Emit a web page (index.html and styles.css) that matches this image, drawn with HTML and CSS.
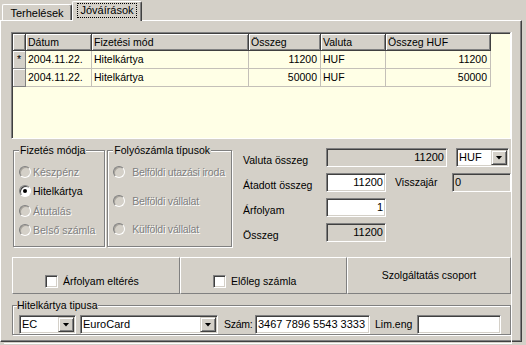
FILE: index.html
```html
<!DOCTYPE html>
<html>
<head>
<meta charset="utf-8">
<link rel="stylesheet" href="styles.css">
</head>
<body>
<div class="tabs">
  <div class="tab">Terhelések</div>
  <div class="tab active"><span class="focus">Jóváírások</span></div>
</div>
<div class="panel">
  <div class="inner">
    <div class="grid">
      <div class="table">
        <div class="hd"></div><div class="hd">Dátum</div><div class="hd">Fizetési mód</div><div class="hd">Összeg</div><div class="hd">Valuta</div><div class="hd">Összeg HUF</div>
        <div class="ind">*</div><div class="c">2004.11.22.</div><div class="c">Hitelkártya</div><div class="c r">11200</div><div class="c">HUF</div><div class="c r">11200</div>
        <div class="ind"></div><div class="c">2004.11.22.</div><div class="c">Hitelkártya</div><div class="c r">50000</div><div class="c">HUF</div><div class="c r">50000</div>
      </div>
    </div>
    <div class="lower">
      <div class="group g1">
        <div class="gtitle">Fizetés módja</div>
        <div class="radios">
          <div class="opt dis"><span class="radio"></span><span class="t">Készpénz</span></div>
          <div class="opt"><span class="radio on"></span><span class="t">Hitelkártya</span></div>
          <div class="opt dis"><span class="radio"></span><span class="t">Átutalás</span></div>
          <div class="opt dis"><span class="radio"></span><span class="t">Belső számla</span></div>
        </div>
      </div>
      <div class="group g2">
        <div class="gtitle">Folyószámla típusok</div>
        <div class="radios">
          <div class="opt dis"><span class="radio"></span><span class="t">Belföldi utazási iroda</span></div>
          <div class="opt dis"><span class="radio"></span><span class="t">Belföldi vállalat</span></div>
          <div class="opt dis"><span class="radio"></span><span class="t">Külföldi vállalat</span></div>
        </div>
      </div>
      <div class="right">
        <div class="frow">
          <div class="lbl">Valuta összeg</div>
          <div class="field ro w121">11200</div>
          <div class="combo huf"><span class="ctext">HUF</span><span class="dbtn"><span class="arrow"></span></span></div>
        </div>
        <div class="frow">
          <div class="lbl">Átadott összeg</div>
          <div class="field w60">11200</div>
          <div class="lbl2">Visszajár</div>
          <div class="field ro w59 left">0</div>
        </div>
        <div class="frow">
          <div class="lbl">Árfolyam</div>
          <div class="field w60">1</div>
        </div>
        <div class="frow">
          <div class="lbl">Összeg</div>
          <div class="field ro w60">11200</div>
        </div>
      </div>
    </div>
    <div class="btnrow">
      <div class="pbtn b1"><span class="chk"></span><span class="t">Árfolyam eltérés</span></div>
      <div class="pbtn b2"><span class="chk"></span><span class="t">Előleg számla</span></div>
      <div class="pbtn b3 center">Szolgáltatás csoport</div>
    </div>
    <div class="group g3">
      <div class="gtitle">Hitelkártya tipusa</div>
      <div class="crow">
        <div class="combo ec"><span class="ctext">EC</span><span class="dbtn"><span class="arrow"></span></span></div>
        <div class="combo euro"><span class="ctext">EuroCard</span><span class="dbtn"><span class="arrow"></span></span></div>
        <div class="lbl3 szam">Szám:</div>
        <div class="field w115 left">3467 7896 5543 3333</div>
        <div class="lbl3 lim">Lim.eng</div>
        <div class="field w84 left"></div>
      </div>
    </div>
  </div>
</div>
</body>
</html>
```

FILE: styles.css
```css
* { box-sizing: border-box; }

body {
  margin: 0;
  background: #d4d0c8;
  font-family: "Liberation Sans", Arial, sans-serif;
  font-size: 10.5px;
  color: #000;
  width: 526px;
  height: 345px;
  overflow: hidden;
}

/* tabs */
.tabs {
  display: flex;
  align-items: flex-end;
  height: 21px;
  padding-left: 2px;
}
.tab {
  width: 70px;
  height: 17px;
  border-top: 1px solid #fff;
  border-left: 1px solid #fff;
  border-right: 1px solid #404040;
  box-shadow: inset -1px 0 #808080;
  border-radius: 2px 2px 0 0;
  display: flex;
  align-items: center;
  justify-content: center;
  padding-bottom: 1px;
  background: #d4d0c8;
  font-size: 11px;
}
.tab.active {
  height: 20px;
  position: relative;
  z-index: 1;
  padding-bottom: 2px;
}
.focus {
  border: 1px dotted #000;
  padding: 0 2px;
  line-height: 13px;
}

/* panel */
.panel {
  position: relative;
  z-index: 0;
  margin-top: -1px;
  width: 522px;
  height: 322px;
  border: 1px solid;
  border-color: #fff #404040 #404040 #fff;
  box-shadow: inset -1px -1px #808080;
  padding: 3px 0 0 3px;
}
.inner {
  width: 508px;
  height: 312px;
  border-right: 1px solid #fff;
  border-bottom: 1px solid #fff;
}

/* grid */
.grid {
  margin: 8px 0 0 7px;
  width: 500px;
  height: 107px;
  background: #ffffe6;
  border: 1px solid;
  border-color: #808080 #fff #fff #808080;
  box-shadow: inset 1px 1px #404040;
  padding: 1px 0 0 1px;
}
.table {
  display: grid;
  grid-template-columns: 13px 66px 157px 72px 65px 105px;
  grid-template-rows: 17px 18px 18px;
}
.hd {
  background: #d4d0c8;
  border-right: 1px solid #404040;
  border-bottom: 1px solid #404040;
  box-shadow: inset 1px 1px #fff, inset -1px -1px #808080;
  padding-left: 2px;
  line-height: 16px;
  white-space: nowrap;
  overflow: hidden;
}
.ind {
  background: #d4d0c8;
  border-right: 1px solid #808080;
  border-bottom: 1px solid #808080;
  box-shadow: inset 1px 1px #fff;
  text-align: center;
  line-height: 17px;
}
.c {
  border-right: 1px solid #c4c0b8;
  border-bottom: 1px solid #c4c0b8;
  padding: 0 3px 0 2px;
  line-height: 17px;
  white-space: nowrap;
}
.c.r { text-align: right; }

/* lower area */
.lower {
  display: flex;
  margin-top: 9px;
  height: 99px;
}
.group {
  border: 1px solid #808080;
  box-shadow: inset 1px 1px #fff, 1px 1px #fff;
}
.g1 { margin: 2px 0 0 9px; width: 94px; height: 97px; }
.g2 { margin: 2px 0 0 2px; width: 127px; height: 97px; }
.gtitle {
  display: table;
  margin: -7px 0 0 5px;
  padding: 0 1px;
  background: #d4d0c8;
  line-height: 13px;
  white-space: nowrap;
}
.g1 .radios { padding-top: 5px; }
.g2 .radios { padding-top: 1px; }
.opt {
  display: flex;
  align-items: center;
  padding-left: 5px;
  height: 19.5px;
  white-space: nowrap;
}
.g2 .opt { height: 28.5px; }
.radio {
  flex: none;
  width: 12px;
  height: 12px;
  border-radius: 50%;
  border: 1px solid;
  border-color: #808080 #fff #fff #808080;
  box-shadow: inset 1px 1px #404040;
  background: #fff;
  margin-right: 2px;
  display: flex;
  align-items: center;
  justify-content: center;
}
.g2 .radio { margin-right: 7px; }
.g2 .t { letter-spacing: -0.2px; }
.dis .radio {
  background: #d4d0c8;
  box-shadow: inset 1px 1px #a8a49c;
}
.dis .t {
  color: #808080;
  text-shadow: 1px 1px 0 #fff;
}
.radio.on::after {
  content: "";
  width: 4px;
  height: 4px;
  border-radius: 50%;
  background: #000;
}

/* right fields */
.right { margin-left: 11px; }
.frow {
  display: flex;
  height: 19px;
  margin-bottom: 6px;
}
.lbl {
  width: 83px;
  padding-top: 6px;
  line-height: 13px;
  white-space: nowrap;
}
.lbl2 {
  width: 57px;
  margin-left: 9px;
  line-height: 19px;
}
.field {
  height: 19px;
  border: 1px solid;
  border-color: #808080 #fff #fff #808080;
  box-shadow: inset 1px 1px #404040, inset -1px -1px #d4d0c8;
  background: #fff;
  padding: 0 2px;
  line-height: 17px;
  text-align: right;
  white-space: nowrap;
  overflow: hidden;
  font-size: 11px;
}
.field.ro { background: #d4d0c8; }
.field.left { text-align: left; }
.w121 { width: 121px; }
.w60 { width: 60px; }
.w59 { width: 59px; }
.w115 { width: 115px; }
.w84 { width: 84px; }

.combo {
  display: flex;
  height: 19px;
  border: 1px solid;
  border-color: #808080 #fff #fff #808080;
  box-shadow: inset 1px 1px #404040, inset -1px -1px #d4d0c8;
  background: #fff;
  padding: 1px;
  font-size: 11px;
}
.ctext {
  flex: 1;
  padding-left: 1px;
  line-height: 15px;
  white-space: nowrap;
}
.dbtn {
  flex: none;
  width: 16px;
  height: 15px;
  background: #d4d0c8;
  border: 1px solid;
  border-color: #d4d0c8 #404040 #404040 #d4d0c8;
  box-shadow: inset 1px 1px #fff, inset -1px -1px #808080;
  display: flex;
  align-items: center;
  justify-content: center;
}
.arrow {
  width: 7px;
  height: 4px;
  background: #000;
  clip-path: polygon(0 0, 100% 0, 50% 100%);
}
.huf { margin-left: 9px; width: 53px; }

/* button row */
.btnrow {
  display: flex;
  margin: 10px 0 0 8px;
}
.pbtn {
  height: 37px;
  border: 1px solid;
  border-color: #fff #808080 #808080 #fff;
  display: flex;
  align-items: flex-start;
  padding: 17px 0 0 32px;
  white-space: nowrap;
}
.pbtn .t { line-height: 13px; }
.b1 { width: 168px; }
.b2 { width: 167px; }
.b3 { width: 164px; }
.pbtn.center {
  padding: 0 0 1px 0;
  align-items: center;
  justify-content: center;
}
.chk {
  flex: none;
  width: 13px;
  height: 13px;
  border: 1px solid;
  border-color: #808080 #fff #fff #808080;
  box-shadow: inset 1px 1px #404040, inset -1px -1px #d4d0c8;
  background: #fff;
  margin-right: 5px;
}

/* card group */
.g3 {
  margin: 11px 0 0 8px;
  width: 499px;
  height: 30px;
}
.g3 .gtitle { margin-left: 4px; padding: 0; }
.crow {
  display: flex;
  align-items: center;
  margin-top: 3px;
  padding-left: 6px;
}
.ec { width: 57px; }
.euro { width: 138px; margin-left: 4px; }
.lbl3 { white-space: nowrap; line-height: 19px; }
.szam { width: 31px; margin-left: 6px; letter-spacing: -0.3px; }
.lim { width: 42px; margin-left: 5px; }
```
